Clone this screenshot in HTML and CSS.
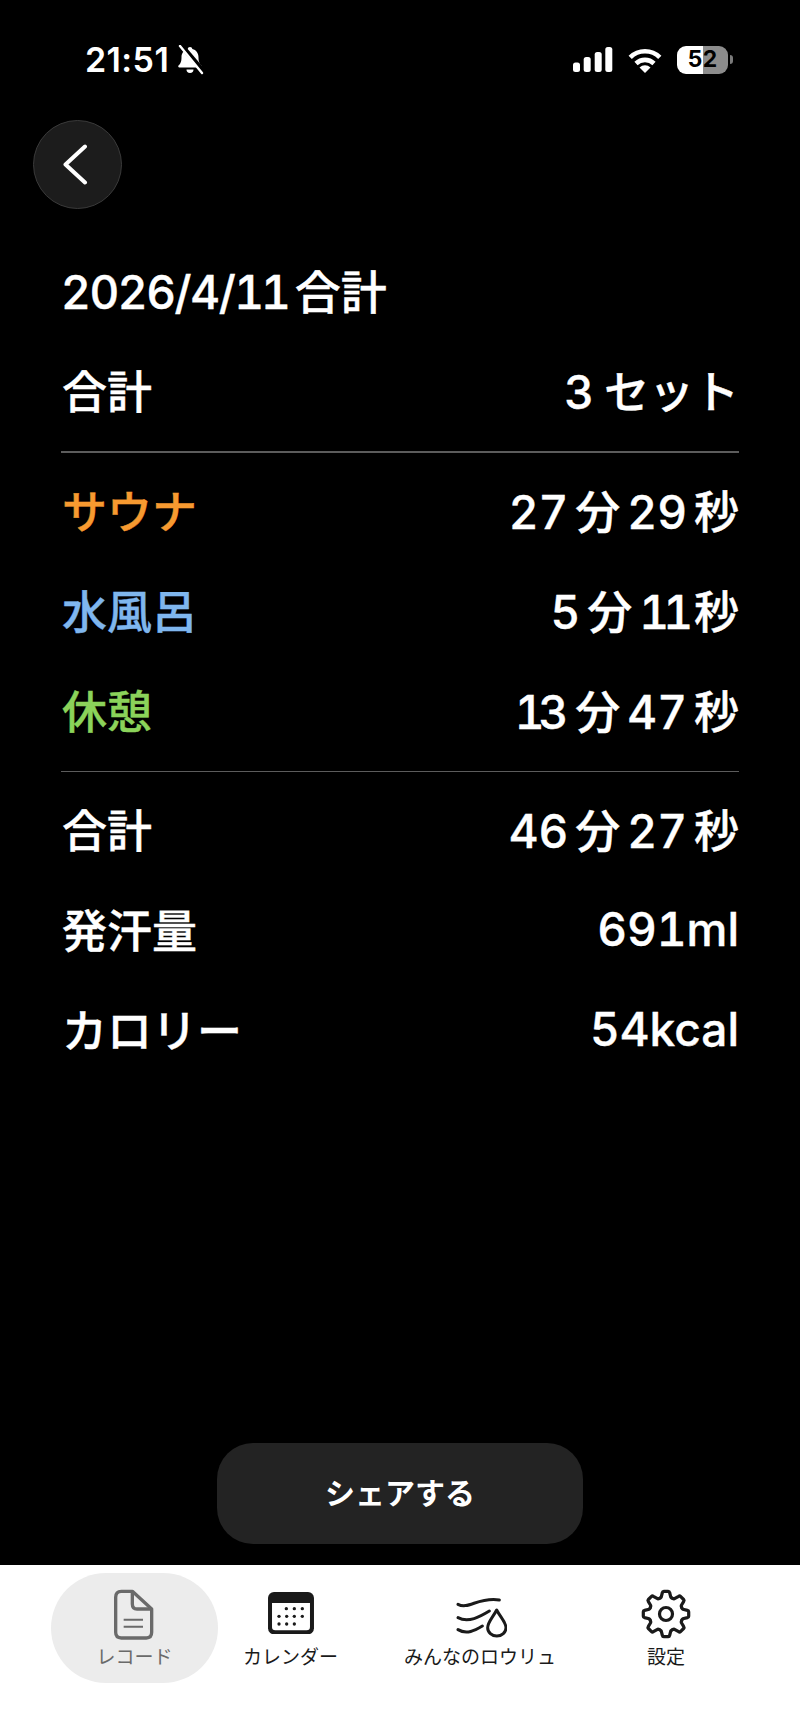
FILE: index.html
```html
<!DOCTYPE html>
<html lang="ja">
<head>
<meta charset="utf-8">
<title>2026/4/11合計</title>
<link rel="stylesheet" href="styles.css">
</head>
<body>
<div class="app">
  <main class="screen">
    <header class="status">
      <div class="status-left">
        <span class="time">21:51</span>
        <svg class="bell" viewBox="0 0 28 30"><path d="M14 2c1.3 0 2.2.9 2.3 2 4 .9 6.2 4.2 6.2 8.4 0 4.500 1.200 6.300 3 8.100.6.700.2 1.900-.9 1.900H3.400c-1.100 0-1.500-1.200-.9-1.900 1.800-1.800 3-3.600 3-8.100C5.500 8.200 7.700 4.900 11.700 4c.1-1.100 1-2 2.300-2z" fill="#fff"/><path d="M10.500 24.500h7a3.500 3.500 0 0 1-7 0z" fill="#fff"/><path d="M5 0l23 27" stroke="#000" stroke-width="5"/><path d="M4 1l22 27" stroke="#fff" stroke-width="2.400" stroke-linecap="round"/></svg>
      </div>
      <div class="status-right">
        <svg class="signal" viewBox="0 0 40 25"><rect x="0" y="15.500" width="7" height="9.500" rx="2.500"/><rect x="10.700" y="10" width="7" height="15" rx="2.500"/><rect x="21.700" y="5" width="7" height="20" rx="2.500"/><rect x="32.300" y="0" width="7" height="25" rx="2.500"/></svg>
        <svg class="wifi" viewBox="0 0 34 26"><path d="M2.200 10.300a21 21 0 0 1 29.600 0M8 16.500a13 13 0 0 1 18 0" fill="none" stroke="#fff" stroke-width="4.600"/><path d="M17 26l-5.500-5.500a8 8 0 0 1 11 0z" fill="#fff"/></svg>
        <div class="battery"><div class="battery-body"><span class="battery-num">52</span></div><span class="battery-nub"></span></div>
      </div>
    </header>

    <button class="back" type="button" aria-label="戻る">
      <svg viewBox="0 0 26 41" class="back-icon"><path d="M23 2.500L3.500 20.500 23 38.500" fill="none" stroke="#fff" stroke-width="4" stroke-linecap="round" stroke-linejoin="round"/></svg>
    </button>

    <h1 class="title">2026/4/<b class="tight">11</b><span>合計</span></h1>

    <section class="list">
      <div class="row"><span>合計</span><span class="val">3<i>セット</i></span></div>
      <hr class="rule">
      <div class="row"><span class="sauna">サウナ</span><span class="val">27<i>分</i>29<i>秒</i></span></div>
      <div class="row"><span class="water">水風呂</span><span class="val">5<i>分</i><b class="tight">11</b><i>秒</i></span></div>
      <div class="row"><span class="rest">休憩</span><span class="val"><b class="tight">1</b>3<i>分</i>47<i>秒</i></span></div>
      <hr class="rule">
      <div class="row"><span>合計</span><span class="val">46<i>分</i>27<i>秒</i></span></div>
      <div class="row"><span>発汗量</span><span class="val">691ml</span></div>
      <div class="row"><span>カロリー</span><span class="val">54kcal</span></div>
    </section>

    <button class="share" type="button">シェアする</button>
  </main>

  <nav class="tabs">
    <a class="tab tab-record active">
      <svg class="ic-doc" viewBox="340 145 123 155"><path d="M365 152H398L456 205V275Q456 292 440 292H365Q348 292 348 275V170Q348 152 365 152Z" fill="none" stroke="#6a6a6a" stroke-width="10" stroke-linejoin="round"/><path d="M398 152V190Q398 205 412 205H456" fill="none" stroke="#6a6a6a" stroke-width="10"/><path d="M372 237H430M372 258H430" stroke="#6a6a6a" stroke-width="6"/></svg>
      <span>レコード</span>
    </a>
    <a class="tab tab-cal">
      <svg class="ic-cal" viewBox="803 157 138 127"><rect x="803" y="157" width="138" height="127" rx="18" fill="#1a1a1a"/><path d="M815 190H929V262Q929 272 919 272H825Q815 272 815 262Z" fill="#fff"/><g fill="#1a1a1a"><circle cx="858" cy="207" r="5"/><circle cx="882" cy="207" r="5"/><circle cx="906" cy="207" r="5"/><circle cx="836" cy="230" r="5"/><circle cx="859" cy="230" r="5"/><circle cx="882" cy="230" r="5"/><circle cx="906" cy="230" r="5"/><circle cx="836" cy="253" r="5"/><circle cx="859" cy="253" r="5"/><circle cx="882" cy="253" r="5"/></g></svg>
      <span>カレンダー</span>
    </a>
    <a class="tab tab-loyly">
      <svg class="ic-loyly" viewBox="168 160 155 130"><g fill="none" stroke="#1a1a1a" stroke-width="9" stroke-linecap="round"><path d="M174 188C205 205 235 165 298 175"/><path d="M174 228C205 245 240 225 268 208"/><path d="M174 264C200 280 225 266 247 253"/><path d="M290 205C278 228 263 242 263 258A27 25 0 0 0 318 258C318 242 302 228 290 205Z" stroke-linejoin="round"/></g></svg>
      <span>みんなのロウリュ</span>
    </a>
    <a class="tab tab-gear">
      <svg class="ic-gear" viewBox="0 0 50 50"><defs><path id="tooth" d="M18.500 9.300Q19.700 9 20.200 8.200L21.400 3.500Q21.600 2.300 22.800 2.300H27.200Q28.400 2.300 28.600 3.500L29.800 8.200Q30.300 9 31.500 9.300"/></defs><g fill="none" stroke="#1a1a1a" stroke-width="3.200" stroke-linecap="round" stroke-linejoin="round"><use href="#tooth"/><use href="#tooth" transform="rotate(45 25 25)"/><use href="#tooth" transform="rotate(90 25 25)"/><use href="#tooth" transform="rotate(135 25 25)"/><use href="#tooth" transform="rotate(180 25 25)"/><use href="#tooth" transform="rotate(225 25 25)"/><use href="#tooth" transform="rotate(270 25 25)"/><use href="#tooth" transform="rotate(315 25 25)"/><circle cx="25" cy="25" r="6.500"/></g></svg>
      <span>設定</span>
    </a>
  </nav>
</div>
</body>
</html>
```

FILE: styles.css
```css
* { box-sizing: border-box; }
html, body { margin: 0; padding: 0; background: #000; }
body { font-family: Inter, "Noto Sans CJK JP", sans-serif; color: #fff; font-variant-numeric: tabular-nums; }
.app { width: 800px; height: 1734px; display: flex; flex-direction: column; overflow: hidden; }
.screen { height: 1565px; background: #000; display: flex; flex-direction: column; }

.status { height: 120px; padding: 45px 67px 0 85px; display: flex; justify-content: space-between; align-items: flex-start; }
.status-left { display: flex; align-items: center; height: 29px; gap: 7px; }
.time { font-size: 34px; font-weight: 600; line-height: 29px; letter-spacing: 0.4px; font-family: Inter, sans-serif; font-variant-numeric: normal; }
.bell { width: 28px; height: 30px; display: block; }
.status-right { display: flex; align-items: center; height: 29px; }
.signal { width: 40px; height: 25px; fill: #fff; display: block; }
.wifi { width: 34px; height: 26px; margin-left: 15px; display: block; }
.battery { display: flex; align-items: center; margin-left: 15px; }
.battery-body { width: 51px; height: 28px; border-radius: 9px; background: linear-gradient(90deg, #fff 0 51%, #8c8c8c 51% 100%); color: #000; display: flex; align-items: center; justify-content: center; }
.battery-num { font-size: 23px; font-weight: 700; line-height: 1; font-family: Inter, sans-serif; }
.battery-nub { width: 3px; height: 9px; margin-left: 2px; background: #7a7a7a; border-radius: 0 3px 3px 0; }

.back { margin: 0 0 0 33px; padding: 0; width: 89px; height: 89px; border-radius: 50%; background: #1c1c1c; border: 1.500px solid #3a3a3a; display: flex; align-items: center; justify-content: center; }
.back-icon { width: 26px; height: 41px; display: block; margin-right: 6px; }

.title { margin: 53px 0 0 61px; font-size: 46px; line-height: 60px; font-weight: 500; letter-spacing: -1.4px; -webkit-text-stroke: 0.4px #fff; }
.title span { margin-left: 7px; letter-spacing: 0; }
.tight { font-weight: inherit; letter-spacing: -6px; }
.title .tight { letter-spacing: -3px; }

.list { margin: 20px 61px 0; }
.row { height: 100px; display: flex; justify-content: space-between; align-items: center; font-size: 45px; font-weight: 500; padding: 0 0 5px 1px; -webkit-text-stroke: 0.4px; }
.val { font-size: 46px; }
.val i { font-style: normal; font-size: 45px; margin: 0 7px; }
.val i:last-child { margin-right: 0; }
.val i:only-child { margin-left: 10px; }
.rule { margin: 9px 0; height: 1.500px; border: 0; background: #5c5c5c; }
.sauna { color: #f79a30; }
.water { color: #7fb6ee; }
.rest { color: #8bd35a; }

.share { margin: auto 0 21px 217px; width: 366px; height: 101px; padding: 0 0 5px; border: 0; border-radius: 36px; background: #232323; color: #fff; font: 600 30px Inter, "Noto Sans CJK JP", sans-serif; }

.tabs { flex: 1; background: #fff; display: grid; grid-template-columns: 167px 145px 234px 138px; padding: 8px 0 0 51px; align-items: start; }
.tab { height: 110px; display: flex; flex-direction: column; align-items: center; color: #1a1a1a; font-size: 19px; line-height: 24px; white-space: nowrap; position: relative; }
.tab span { position: absolute; top: 73px; }
.tab-record { background: #ececec; border-radius: 55px; color: #6a6a6a; }
.ic-doc { width: 41px; height: 51.700px; margin-top: 16px; margin-right: 2px; }
.ic-cal { width: 46px; height: 42.300px; margin-top: 19px; }
.ic-loyly { width: 51.700px; height: 43.300px; margin-top: 22px; margin-left: 3px; }
.ic-gear { width: 50px; height: 50px; margin-top: 16px; }
```
